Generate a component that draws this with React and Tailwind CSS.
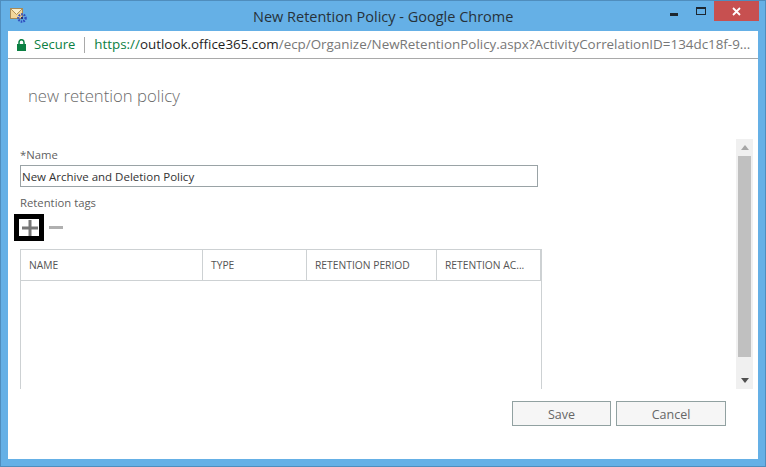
const ui = { fontFamily: '"Open Sans", "Noto Sans", sans-serif' };

function AppIcon() {
  return (
    <svg width="18" height="16" viewBox="0 0 18 16" className="shrink-0">
      <rect x="0.5" y="0.5" width="12" height="10" fill="#f3d79a" stroke="#a98a55" />
      <path d="M1 1l5.5 5.5L12 1" fill="#fbeec8" stroke="#b4935a" strokeWidth="1" />
      <circle cx="12" cy="10" r="3.6" fill="none" stroke="#2f4fc0" strokeWidth="2.4" strokeDasharray="1.6 1" />
      <circle cx="12" cy="10" r="1.2" fill="#1d2f7a" />
    </svg>
  );
}

function Lock() {
  return (
    <svg width="9" height="12" viewBox="0 0 9 12" className="shrink-0">
      <rect x="0" y="5" width="9" height="7" fill="#0b8043" />
      <path d="M2 5.5V3.2a2.5 2.5 0 0 1 5 0v2.3" fill="none" stroke="#0b8043" strokeWidth="1.5" />
    </svg>
  );
}

function Col({ w, children }) {
  return (
    <div className={`${w} h-full flex items-center pl-[8px] pt-px border-r border-[#cdd1d3] text-[10.3px] text-[#555555] whitespace-nowrap overflow-hidden`}>
      {children}
    </div>
  );
}

function Arrow({ up, color }) {
  return (
    <svg width="8" height="5" viewBox="0 0 8 5">
      <path d={up ? "M0 5L4 0l4 5z" : "M0 0h8L4 5z"} fill={color} />
    </svg>
  );
}

export default function App() {
  return (
    <div style={ui} className="w-[766px] h-[467px] bg-[#65b0e6] border border-[#4f8dbd] flex flex-col overflow-hidden">
      {/* Title bar */}
      <div className="h-[30px] shrink-0 flex items-start relative">
        <div className="pl-[9px] pt-[7px]"><AppIcon /></div>
        <div className="absolute left-[252px] top-[6px] text-[14.5px] leading-[20px] text-[#27323a] whitespace-nowrap">New Retention Policy - Google Chrome</div>
        <div className="ml-auto mr-[6px] flex items-start">
          <div className="w-[8px] h-[3px] bg-[#1d2730] mt-[12px] mr-[18px]" />
          <div className="w-[10px] h-[8px] border border-t-2 border-[#1d2730] mt-[6px] mr-[8px]" />
          <div className="w-[45px] h-[20px] bg-[#c75050] flex items-center justify-center">
            <svg width="9" height="9" viewBox="0 0 9 9"><path d="M1 1l7 7M8 1l-7 7" stroke="#fff" strokeWidth="1.8" /></svg>
          </div>
        </div>
      </div>

      {/* Client */}
      <div className="mx-[7px] flex-1 min-h-0 bg-white flex flex-col">
        <div className="h-[27px] shrink-0 border-b border-[#a9a9a9] flex items-center pl-[9px] whitespace-nowrap overflow-hidden box-content">
          <Lock />
          <span className="ml-[8px] text-[#0b8043] text-[13px]">Secure</span>
          <span className="w-px h-[16px] bg-[#a9a9a9] mx-[9px]" />
          <span className="text-[13.4px]">
            <span className="text-[#0b8043]">https://</span>
            <span className="text-[#1f1f1f]">outlook.office365.com</span>
            <span className="text-[#777777]">/ecp/Organize/NewRetentionPolicy.aspx?ActivityCorrelationID=134dc18f-9...</span>
          </span>
        </div>

        <div className="h-[80px] shrink-0 pl-[20px] pt-[26px] text-[16.7px] leading-[22px] font-light text-[#6a6a6a]">new retention policy</div>

        {/* Scrolling form */}
        <div className="h-[250px] shrink-0 flex overflow-hidden">
          <div className="w-[728px] shrink-0 pl-[12px] pt-[8px] overflow-hidden text-[#5f5f5f]">
            <div className="text-[11.3px] leading-[15px]">*Name</div>
            <div className="mt-[3px] w-[518px] h-[22px] border border-[#9aa3a6] flex items-center pl-[1px] pt-px text-[11.5px] text-[#333333] whitespace-nowrap">New Archive and Deletion Policy</div>
            <div className="mt-[8px] text-[11.3px] leading-[15px]">Retention tags</div>
            <div className="mt-[4px] -ml-[6px] flex items-center">
              <div className="w-[30px] h-[27px] border-[5px] border-black flex items-center justify-center">
                <svg width="16" height="16" viewBox="0 0 16 16" className="ml-[2px]"><path d="M0 8h16M8 0v16" stroke="#777777" strokeWidth="3" /></svg>
              </div>
              <div className="ml-[5px] w-[14px] h-[3px] bg-[#b0b0b0]" />
            </div>
            <div className="mt-[8px] w-[522px] h-[170px] border border-b-0 border-[#cdd1d3]">
              <div className="h-[31px] border-b border-[#cdd1d3] flex">
                <Col w="w-[182px]">NAME</Col>
                <Col w="w-[104px]">TYPE</Col>
                <Col w="w-[130px]">RETENTION PERIOD</Col>
                <Col w="w-[104px]">RETENTION AC...</Col>
              </div>
            </div>
          </div>
          <div className="w-[17px] bg-[#f0f0f0] flex flex-col items-center">
            <div className="h-[17px] w-full flex items-center justify-center shrink-0"><Arrow up color="#a6a6a6" /></div>
            <div className="w-[13px] h-[201px] bg-[#c0c0c0] shrink-0" />
            <div className="flex-1 w-full flex items-end justify-center pb-[6px]"><Arrow color="#505050" /></div>
          </div>
        </div>

        {/* Footer */}
        <div className="flex justify-end gap-[5px] pt-[12px] pr-[32px]">
          <button className="w-[99px] h-[25px] bg-[#f6f6f6] border border-[#91a1a1] text-[12.5px] leading-[24px] pt-px text-[#666666]">Save</button>
          <button className="w-[110px] h-[25px] bg-[#f6f6f6] border border-[#91a1a1] text-[12.5px] leading-[24px] pt-px text-[#666666]">Cancel</button>
        </div>
      </div>
      <div className="h-[7px] shrink-0" />
    </div>
  );
}
